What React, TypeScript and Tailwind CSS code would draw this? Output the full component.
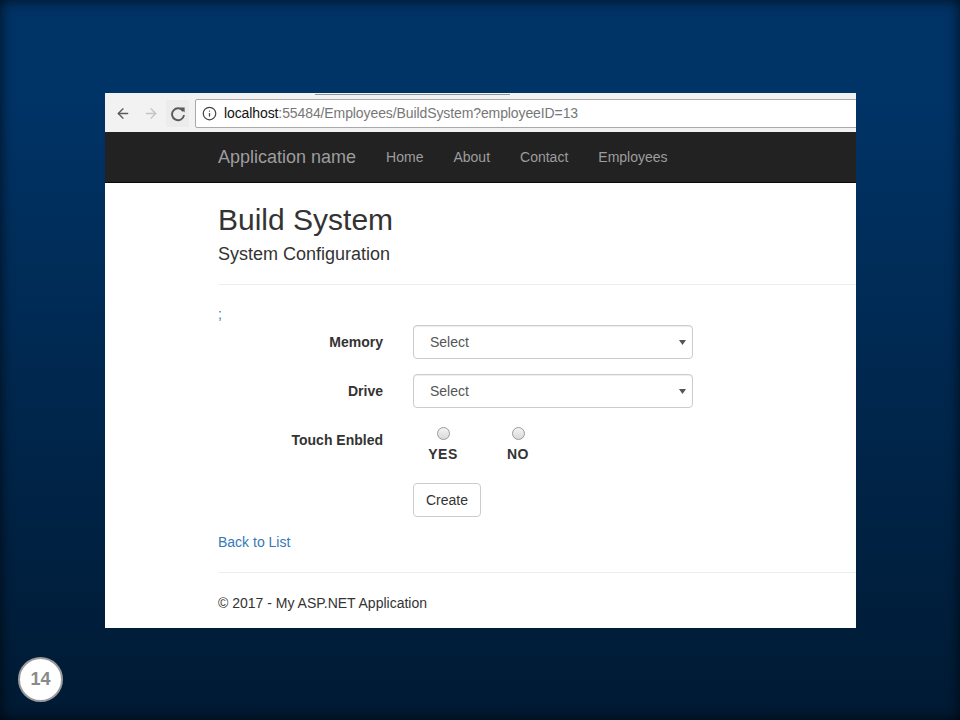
import { ArrowLeft, ArrowRight, Info } from 'lucide-react';

const NAV = ['Home', 'About', 'Contact', 'Employees'];

function Reload() {
  return (
    <svg width="16" height="16" viewBox="0 0 16 16" fill="none">
      <path d="M13.2 5.2A6 6 0 1 0 14 9" stroke="#5a5a5a" strokeWidth="1.9" />
      <polygon points="9.6,1.6 14.6,1.6 14.6,6.6" fill="#5a5a5a" />
    </svg>
  );
}

function SelectBox() {
  return (
    <div className="ml-[30px] flex h-[34px] w-[280px] items-center justify-between rounded-[4px] border border-[#ccc] bg-white pl-[16px] pr-[6px] text-[14px] text-[#555] shadow-[inset_0_1px_1px_rgba(0,0,0,0.075)]">
      <span>Select</span>
      <svg width="7" height="5" viewBox="0 0 7 5">
        <polygon points="0,0 7,0 3.5,5" fill="#555" />
      </svg>
    </div>
  );
}

function Radio({ label }: { label: string }) {
  return (
    <div className="flex w-[60px] flex-col items-center">
      <div className="mt-[4px] h-[13px] w-[13px] rounded-full border border-[#9a9a9a] bg-[linear-gradient(180deg,#f4f4f4,#d9d9d9)]" />
      <span className="mt-[6px] text-[14px] font-bold leading-[17px] tracking-[0.5px] text-[#333]">{label}</span>
    </div>
  );
}

export default function App() {
  return (
    <div className="relative h-[720px] w-[960px] overflow-hidden bg-[linear-gradient(180deg,#003366_0%,#003366_14%,#001a33_100%)] font-['Liberation_Sans',Arial,sans-serif]">
      <div className="pointer-events-none absolute inset-0 shadow-[inset_0_0_14px_rgba(0,0,0,0.75)]" />

      <div className="pl-[105px] pt-[93px]">
        {/* screenshot of the page */}
        <div className="h-[535px] w-[751px] overflow-hidden bg-white">
          {/* browser chrome */}
          <div className="h-[39px] bg-[#f2f2f2]">
            <div className="flex h-[6px]">
              <div className="ml-[210px] mt-[1px] h-[1px] w-[195px] bg-[#8e949c]" />
            </div>
            <div className="flex items-center">
              <div className="ml-[10px] flex h-[26px] w-[16px] items-center justify-center">
                <ArrowLeft size={17} strokeWidth={2} color="#5a5a5a" />
              </div>
              <div className="ml-[12px] flex h-[26px] w-[16px] items-center justify-center">
                <ArrowRight size={17} strokeWidth={2} color="#c4c4c4" />
              </div>
              <div className="ml-[7px] flex h-[27px] w-[23px] items-center justify-center bg-[#ececec]">
                <Reload />
              </div>
              <div className="ml-[6px] mr-[-6px] flex h-[29px] flex-1 items-center rounded-[2px] border border-[#a9a9a9] bg-white pl-[6px] text-[14px] tracking-[-0.1px]">
                <Info size={15} strokeWidth={2} color="#444" />
                <span className="ml-[7px] text-[#111]">localhost</span>
                <span className="text-[#777]">:55484/Employees/BuildSystem?employeeID=13</span>
              </div>
            </div>
          </div>

          {/* navbar */}
          <div className="flex h-[51px] items-center border-b border-[#080808] bg-[#222] pl-[113px]">
            <span className="text-[18px] text-[#9d9d9d]">Application name</span>
            <div className="ml-[30px] flex gap-[30px] text-[14px] text-[#9d9d9d]">
              {NAV.map((n) => (
                <span key={n}>{n}</span>
              ))}
            </div>
          </div>

          {/* body */}
          <div className="pl-[113px] text-[14px] text-[#333]">
            <h2 className="mt-[20px] text-[30px] leading-[33px]">Build System</h2>
            <h4 className="mt-[8px] text-[18px] leading-[20px]">System Configuration</h4>
            <div className="mt-[20px] h-px bg-[#eee]" />
            <div className="mt-[19px] leading-[20px] text-[#337ab7]">;</div>

            <div className="mt-[1px] flex items-center">
              <label className="w-[165px] text-right font-bold">Memory</label>
              <SelectBox />
            </div>
            <div className="mt-[15px] flex items-center">
              <label className="w-[165px] text-right font-bold">Drive</label>
              <SelectBox />
            </div>
            <div className="mt-[15px] flex h-[45px] items-start">
              <label className="w-[165px] pt-[7px] text-right font-bold leading-[20px]">Touch Enbled</label>
              <div className="ml-[30px] flex gap-[15px]">
                <Radio label="YES" />
                <Radio label="NO" />
              </div>
            </div>

            <div className="mt-[15px] flex">
              <button className="ml-[195px] h-[34px] w-[68px] rounded-[4px] border border-[#ccc] bg-white text-[14px] text-[#333]">
                Create
              </button>
            </div>

            <div className="mt-[15px] leading-[20px] text-[#337ab7]">Back to List</div>
            <div className="mt-[20px] h-px bg-[#eee]" />
            <div className="mt-[20px] leading-[20px]">© 2017 - My ASP.NET Application</div>
          </div>
        </div>

        {/* slide number */}
        <div className="ml-[-87px] mt-[29px] flex h-[45px] w-[45px] items-center justify-center rounded-full border-2 border-[#9a9a9a] bg-white text-[18px] font-bold text-[#8a8a8a]">
          14
        </div>
      </div>
    </div>
  );
}
